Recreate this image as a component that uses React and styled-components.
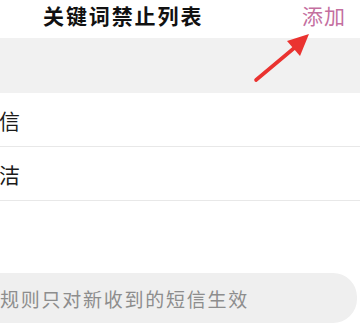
import React from 'react'
import styled, { createGlobalStyle } from 'styled-components'

const Global = createGlobalStyle`
  body {
    margin: 0;
    background: #fff;
    font-family: "Noto Sans CJK SC", "Noto Sans", sans-serif;
  }
`

const keywords = ['信', '洁']

const App = () => {
  return (
    <Page>
      <Global />
      <Header>
        <Title>关键词禁止列表</Title>
        <AddLink>添加</AddLink>
      </Header>
      <Band />
      <List>
        {keywords.map((k) => (
          <Row key={k}>{k}</Row>
        ))}
      </List>
      <Notice>规则只对新收到的短信生效</Notice>
      <Arrow width="70" height="60" viewBox="0 0 70 60">
        <path d="M4 52 L47 16" stroke="#ea3330" strokeWidth="3.6" strokeLinecap="round" />
        <path d="M57 6 L35 13 L48 28 Z" fill="#ea3330" />
      </Arrow>
    </Page>
  )
}

export default App

const Page = styled.div`
  position: relative;
  width: 360px;
  height: 327px;
  overflow: hidden;
  background: #fff;
`

const Header = styled.div`
  height: 38px;
  display: flex;
  align-items: flex-start;
  justify-content: space-between;
  padding: 3px 14px 0 43px;
  box-sizing: border-box;
`

const Title = styled.div`
  font-size: 21px;
  font-weight: 700;
  line-height: 25px;
  color: #111;
  letter-spacing: 1.9px;
`

const AddLink = styled.div`
  font-size: 21px;
  line-height: 25px;
  color: #c46f9f;
  letter-spacing: 1px;
`

const Band = styled.div`
  height: 55px;
  background: #f1f1f1;
`

const List = styled.div`
  display: flex;
  flex-direction: column;
`

const Row = styled.div`
  height: 53px;
  display: flex;
  align-items: center;
  font-size: 21px;
  color: #1a1a1a;
  border-bottom: 1px solid #e8e8e8;
  margin-left: -1px;
`

const Notice = styled.div`
  margin: 72px 3px 0 -24px;
  padding-left: 24px;
  height: 50px;
  display: flex;
  align-items: center;
  border-radius: 24px;
  background: #efefef;
  font-size: 19px;
  color: #8d8d8d;
  letter-spacing: 1.75px;
`

const Arrow = styled.svg`
  position: absolute;
  left: 252px;
  top: 28px;
`
